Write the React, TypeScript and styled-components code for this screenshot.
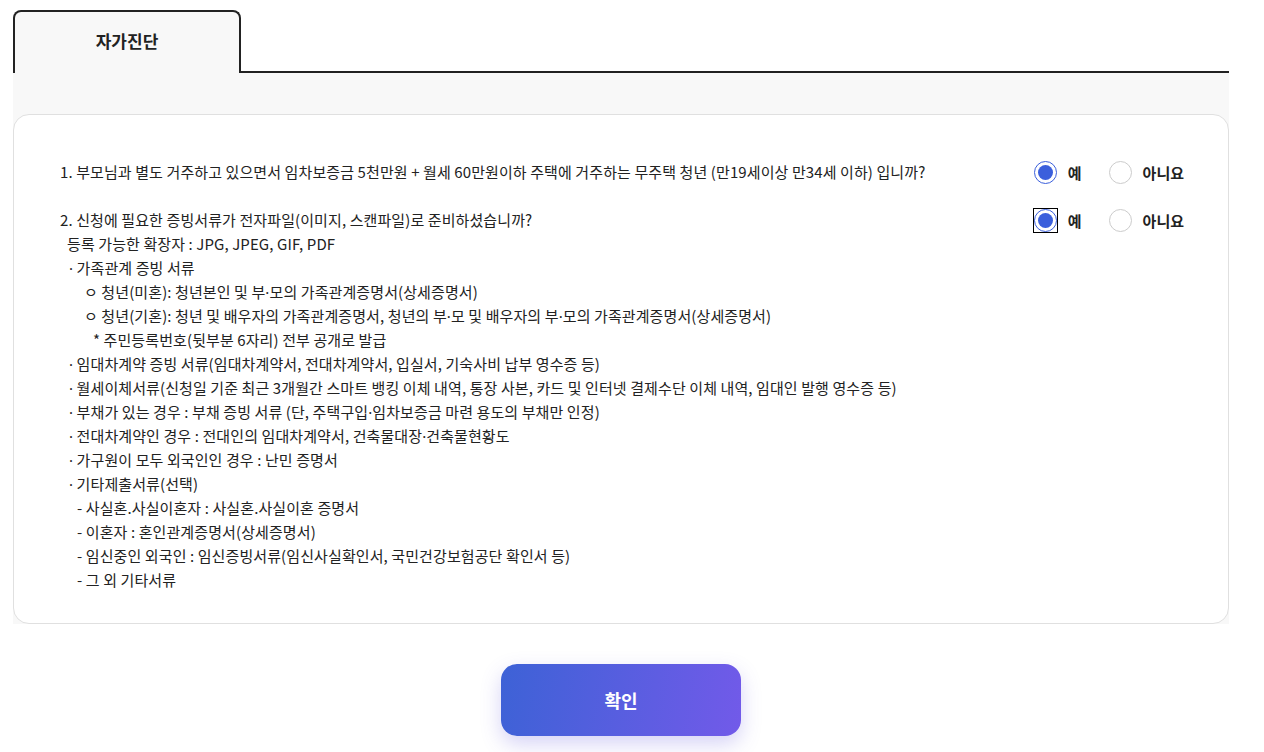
import * as React from 'react';
import styled, { createGlobalStyle } from 'styled-components';

const GlobalStyle = createGlobalStyle`
    body {
        margin: 0;
        background: #ffffff;
        font-family: 'Noto Sans CJK KR', 'Noto Sans', sans-serif;
        color: #222222;
    }
`;

const Page = styled.div`
    width: 1216px;
    padding: 10px 0 0 13px;
`;

const TabBar = styled.div`
    display: flex;
    align-items: flex-end;
`;

const Tab = styled.div`
    box-sizing: border-box;
    width: 228px;
    height: 63px;
    border: 2px solid #222222;
    border-bottom: none;
    border-radius: 8px 8px 0 0;
    background: #f8f8f8;
    display: flex;
    align-items: center;
    justify-content: center;
    padding-bottom: 4px;
    font-size: 17px;
    font-weight: 700;
    color: #222222;
`;

const TabLine = styled.div`
    flex: 1;
    border-bottom: 2px solid #222222;
`;

const Panel = styled.div`
    background: #f8f8f8;
    padding-top: 41px;
`;

const Card = styled.div`
    background: #ffffff;
    border: 1px solid #e0e0e0;
    border-radius: 16px;
    padding: 45px 44px 31px 46px;
    display: flex;
    flex-direction: column;
    gap: 23px;
`;

const Row = styled.div`
    display: flex;
    justify-content: space-between;
    align-items: flex-start;
`;

const Question = styled.div`
    font-size: 15px;
    line-height: 24px;
    letter-spacing: 0.1px;
    color: #222222;
`;

const Line = styled.div<{ $indent?: number }>`
    padding-left: ${p => p.$indent || 0}px;
    white-space: nowrap;
`;

const Dot = styled.span`
    font-family: 'Noto Sans', sans-serif;
`;

const Options = styled.div`
    display: flex;
    align-items: center;
    gap: 26px;
    height: 25px;
`;

const Option = styled.label`
    display: flex;
    align-items: center;
    gap: 10px;
    font-size: 15px;
    font-weight: 700;
    color: #222222;
`;

const FocusBox = styled.span<{ $focused?: boolean }>`
    display: flex;
    border: 1px solid ${p => (p.$focused ? '#000000' : 'transparent')};
`;

const RadioCircle = styled.span<{ $checked?: boolean }>`
    box-sizing: border-box;
    width: 23px;
    height: 23px;
    border-radius: 50%;
    border: ${p => (p.$checked ? '1.5px solid #3b5fdc' : '1px solid #cccccc')};
    display: flex;
    align-items: center;
    justify-content: center;
    &::after {
        content: '';
        display: ${p => (p.$checked ? 'block' : 'none')};
        width: 15px;
        height: 15px;
        border-radius: 50%;
        background: #3b5fdc;
    }
`;

const Footer = styled.div`
    display: flex;
    justify-content: center;
    padding: 40px 0 16px;
`;

const ConfirmButton = styled.button`
    width: 240px;
    height: 72px;
    border: none;
    border-radius: 16px;
    background: linear-gradient(100deg, #3d62d6 0%, #725ae9 100%);
    box-shadow: 0 8px 20px rgba(90, 80, 220, 0.25);
    color: #ffffff;
    font-family: 'Noto Sans CJK KR', sans-serif;
    font-size: 18px;
    font-weight: 700;
    cursor: pointer;
`;

interface RadioProps {
    checked?: boolean;
    focused?: boolean;
    label: string;
}

const Radio = ({ checked, focused, label }: RadioProps) => (
    <Option>
        <FocusBox $focused={focused}>
            <RadioCircle $checked={checked} />
        </FocusBox>
        {label}
    </Option>
);

// render the middle dot with a proportional glyph, as in the original page
const withDots = (text: string) =>
    text.split('·').flatMap((part, i) => (i === 0 ? [part] : [<Dot key={i}>·</Dot>, part]));

const details: [number, string][] = [
    [7, '등록 가능한 확장자 : JPG, JPEG, GIF, PDF'],
    [9, '· 가족관계 증빙 서류'],
    [24, 'ㅇ 청년(미혼): 청년본인 및 부·모의 가족관계증명서(상세증명서)'],
    [24, 'ㅇ 청년(기혼): 청년 및 배우자의 가족관계증명서, 청년의 부·모 및 배우자의 부·모의 가족관계증명서(상세증명서)'],
    [33, '* 주민등록번호(뒷부분 6자리) 전부 공개로 발급'],
    [9, '· 임대차계약 증빙 서류(임대차계약서, 전대차계약서, 입실서, 기숙사비 납부 영수증 등)'],
    [9, '· 월세이체서류(신청일 기준 최근 3개월간 스마트 뱅킹 이체 내역, 통장 사본, 카드 및 인터넷 결제수단 이체 내역, 임대인 발행 영수증 등)'],
    [9, '· 부채가 있는 경우 : 부채 증빙 서류 (단, 주택구입·임차보증금 마련 용도의 부채만 인정)'],
    [9, '· 전대차계약인 경우 : 전대인의 임대차계약서, 건축물대장·건축물현황도'],
    [9, '· 가구원이 모두 외국인인 경우 : 난민 증명서'],
    [9, '· 기타제출서류(선택)'],
    [17, '- 사실혼.사실이혼자 : 사실혼.사실이혼 증명서'],
    [17, '- 이혼자 : 혼인관계증명서(상세증명서)'],
    [17, '- 임신중인 외국인 : 임신증빙서류(임신사실확인서, 국민건강보험공단 확인서 등)'],
    [17, '- 그 외 기타서류'],
];

export default function App() {
    return (
        <Page>
            <GlobalStyle />
            <TabBar>
                <Tab>자가진단</Tab>
                <TabLine />
            </TabBar>
            <Panel>
                <Card>
                    <Row>
                        <Question>
                            <Line>
                                1. 부모님과 별도 거주하고 있으면서 임차보증금 5천만원 + 월세 60만원이하 주택에 거주하는 무주택 청년 (만19세이상 만34세 이하) 입니까?
                            </Line>
                        </Question>
                        <Options>
                            <Radio checked label="예" />
                            <Radio label="아니요" />
                        </Options>
                    </Row>
                    <Row>
                        <Question>
                            <Line>2. 신청에 필요한 증빙서류가 전자파일(이미지, 스캔파일)로 준비하셨습니까?</Line>
                            {details.map(([indent, text], i) => (
                                <Line key={i} $indent={indent}>
                                    {withDots(text)}
                                </Line>
                            ))}
                        </Question>
                        <Options>
                            <Radio checked focused label="예" />
                            <Radio label="아니요" />
                        </Options>
                    </Row>
                </Card>
            </Panel>
            <Footer>
                <ConfirmButton>확인</ConfirmButton>
            </Footer>
        </Page>
    );
}
